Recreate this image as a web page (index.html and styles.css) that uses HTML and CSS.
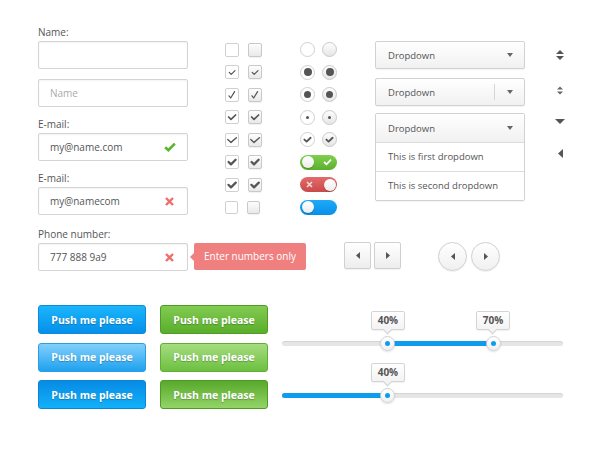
FILE: index.html
```html
<!DOCTYPE html>
<html lang="en">
<head>
    <meta charset="UTF-8">
    <meta name="viewport" content="width=device-width, initial-scale=1.0">
    <title>UI Kit</title>
    <link rel="stylesheet" href="styles.css">
</head>
<body>
<div class="page">
    <div class="top">
        <div class="fields">
            <div class="field">
                <label>Name:</label>
                <div class="input"></div>
            </div>
            <div class="input"><span class="placeholder">Name</span></div>
            <div class="field">
                <label>E-mail:</label>
                <div class="input">
                    <span>my@name.com</span>
                    <svg class="ok" width="12" height="10" viewBox="0 0 12 10"><path d="M1.2 5.2 L4.4 8.2 L10.8 1.6" fill="none" stroke="#5ab52e" stroke-width="2.6"/></svg>
                </div>
            </div>
            <div class="field">
                <label>E-mail:</label>
                <div class="input">
                    <span>my@namecom</span>
                    <svg class="bad" width="9" height="9" viewBox="0 0 9 9"><path d="M1 1 L8 8 M8 1 L1 8" stroke="#ee6d6d" stroke-width="2.4"/></svg>
                </div>
            </div>
        </div>

        <div class="tools">
            <div class="checks">
                <div class="row"><span class="box"></span><span class="box alt"></span></div>
                <div class="row">
                    <span class="box"><svg viewBox="0 0 14 14"><path d="M4.2 7.4 L6.2 9.4 L10 5.6" class="mk" stroke-width="1.2"/></svg></span>
                    <span class="box alt"><svg viewBox="0 0 14 14"><path d="M4.2 7.4 L6.2 9.4 L10 5.6" class="mk" stroke-width="1.2"/></svg></span>
                </div>
                <div class="row">
                    <span class="box"><svg viewBox="0 0 14 14"><path d="M4 7.8 L5.7 10 L9.6 3.6" class="mk" stroke-width="1.2"/></svg></span>
                    <span class="box alt"><svg viewBox="0 0 14 14"><path d="M4 7.8 L5.7 10 L9.6 3.6" class="mk" stroke-width="1.2"/></svg></span>
                </div>
                <div class="row">
                    <span class="box"><svg viewBox="0 0 14 14"><path d="M3.6 7 L6 9.4 L10.6 5" class="mk" stroke-width="1.7"/></svg></span>
                    <span class="box alt"><svg viewBox="0 0 14 14"><path d="M3.6 7 L6 9.4 L10.6 5" class="mk" stroke-width="1.7"/></svg></span>
                </div>
                <div class="row">
                    <span class="box"><svg viewBox="0 0 14 14"><path d="M2.8 6.4 L6 9.4 L11.4 4.8" class="mk" stroke-width="1.4"/></svg></span>
                    <span class="box alt"><svg viewBox="0 0 14 14"><path d="M2.8 6.4 L6 9.4 L11.4 4.8" class="mk" stroke-width="1.4"/></svg></span>
                </div>
                <div class="row">
                    <span class="box"><svg viewBox="0 0 14 14"><path d="M3.6 7 L6 9.4 L10.6 4.8" class="mk" stroke-width="2.3"/></svg></span>
                    <span class="box alt"><svg viewBox="0 0 14 14"><path d="M3.6 7 L6 9.4 L10.6 4.8" class="mk" stroke-width="2.3"/></svg></span>
                </div>
                <div class="row">
                    <span class="box"><svg viewBox="0 0 14 14"><path d="M3.4 6.8 L6 9.4 L10.8 4.6" class="mk" stroke-width="2.2"/></svg></span>
                    <span class="box alt"><svg viewBox="0 0 14 14"><path d="M3.4 6.8 L6 9.4 L10.8 4.6" class="mk" stroke-width="2.2"/></svg></span>
                </div>
                <div class="row"><span class="box small"></span><span class="box alt small"></span></div>
            </div>

            <div class="radios">
                <div class="row"><span class="radio"></span><span class="radio alt"></span></div>
                <div class="row"><span class="radio"><i class="dot big"></i></span><span class="radio alt"><i class="dot big"></i></span></div>
                <div class="row"><span class="radio"><i class="dot mid"></i></span><span class="radio alt"><i class="dot mid"></i></span></div>
                <div class="row"><span class="radio"><i class="dot tiny"></i></span><span class="radio alt"><i class="dot tiny"></i></span></div>
                <div class="row">
                    <span class="radio"><svg viewBox="0 0 15 15"><path d="M4.4 7.6 L6.6 9.6 L10.6 5.8" class="mk" stroke-width="1.9"/></svg></span>
                    <span class="radio alt"><svg viewBox="0 0 15 15"><path d="M4.4 7.6 L6.6 9.6 L10.6 5.8" class="mk" stroke-width="1.9"/></svg></span>
                </div>
                <div class="row">
                    <span class="toggle green"><i class="knob"></i><svg width="9" height="8" viewBox="0 0 9 8"><path d="M1 4 L3.5 6.3 L8 1.6" fill="none" stroke="#fff" stroke-width="1.8"/></svg></span>
                </div>
                <div class="row">
                    <span class="toggle red"><svg width="7" height="7" viewBox="0 0 7 7"><path d="M1 1 L6 6 M6 1 L1 6" stroke="#f6dada" stroke-width="1.6"/></svg><i class="knob"></i></span>
                </div>
                <div class="row">
                    <span class="toggle blue"><i class="knob"></i></span>
                </div>
            </div>

            <div class="dropdowns">
                <div class="dropdown">
                    <span>Dropdown</span>
                    <i class="caret"></i>
                </div>
                <div class="dropdown">
                    <span>Dropdown</span>
                    <span class="split"><i class="sep"></i><i class="caret"></i></span>
                </div>
                <div class="dropdown-open">
                    <div class="dropdown-head">
                        <span>Dropdown</span>
                        <i class="caret"></i>
                    </div>
                    <div class="dropdown-item">This is first dropdown</div>
                    <div class="dropdown-item">This is second dropdown</div>
                </div>
            </div>

            <div class="arrows">
                <svg class="a1" width="8" height="12" viewBox="0 0 8 12"><path d="M0 5 L4 1 L8 5 Z M0 7 L8 7 L4 11 Z" fill="#555"/></svg>
                <svg class="a2" width="6" height="9" viewBox="0 0 6 9"><path d="M0 3.5 L3 0.5 L6 3.5 Z M0 5.5 L6 5.5 L3 8.5 Z" fill="#666"/></svg>
                <svg class="a3" width="10" height="5" viewBox="0 0 10 5"><path d="M0 0 L10 0 L5 5 Z" fill="#555"/></svg>
                <svg class="a4" width="5" height="9" viewBox="0 0 5 9"><path d="M5 0 L5 9 L0 4.5 Z" fill="#555"/></svg>
            </div>
        </div>

        <div class="field phone">
            <label>Phone number:</label>
            <div class="input">
                <span>777 888 9a9</span>
                <svg class="bad" width="9" height="9" viewBox="0 0 9 9"><path d="M1 1 L8 8 M8 1 L1 8" stroke="#ee6d6d" stroke-width="2.4"/></svg>
            </div>
            <div class="error-tip">Enter numbers only</div>
        </div>

        <div class="pagers">
            <div class="pager-group">
                <span class="pg"><svg width="4" height="7" viewBox="0 0 4 7"><path d="M4 0 L4 7 L0 3.5 Z" fill="#555"/></svg></span>
                <span class="pg"><svg width="4" height="7" viewBox="0 0 4 7"><path d="M0 0 L0 7 L4 3.5 Z" fill="#555"/></svg></span>
            </div>
            <div class="pager-group round">
                <span class="pg"><svg width="4" height="7" viewBox="0 0 4 7"><path d="M4 0 L4 7 L0 3.5 Z" fill="#555"/></svg></span>
                <span class="pg"><svg width="4" height="7" viewBox="0 0 4 7"><path d="M0 0 L0 7 L4 3.5 Z" fill="#555"/></svg></span>
            </div>
        </div>
    </div>

    <div class="bottom">
        <div class="buttons">
            <button class="btn blue">Push me please</button>
            <button class="btn green">Push me please</button>
            <button class="btn blue hover">Push me please</button>
            <button class="btn green hover">Push me please</button>
            <button class="btn blue active">Push me please</button>
            <button class="btn green active">Push me please</button>
        </div>

        <div class="sliders">
            <div class="slider first">
                <div class="fill" style="left:37.7%; width:37.4%"></div>
                <div class="handle" style="left:37.7%"><span class="tip">40%</span></div>
                <div class="handle" style="left:75.1%"><span class="tip">70%</span></div>
            </div>
            <div class="slider second">
                <div class="fill" style="left:0; width:37.7%"></div>
                <div class="handle" style="left:37.7%"><span class="tip">40%</span></div>
            </div>
        </div>
    </div>
</div>
</body>
</html>
```

FILE: styles.css
```css
body {
    margin: 0;
    font-family: "Open Sans", sans-serif;
    font-size: 10px;
    color: #555;
    background: #fff;
}
.page {
    padding: 25px 0 0 38px;
}
.top {
    display: grid;
    grid-template-columns: 150px 1fr;
    column-gap: 37px;
    row-gap: 12px;
}

/* inputs */
.fields {
    display: flex;
    flex-direction: column;
    gap: 10px;
}
.field label {
    display: block;
    line-height: 14px;
    margin-bottom: 2px;
    color: #555;
}
.input {
    box-sizing: border-box;
    height: 28px;
    border: 1px solid #d4d4d4;
    border-radius: 2px;
    padding: 0 10px 0 11px;
    display: flex;
    align-items: center;
    justify-content: space-between;
    box-shadow: inset 0 1px 2px rgba(0,0,0,0.05);
    color: #555;
}
.placeholder {
    color: #aaa;
}
.input .ok {
    margin-right: 1px;
}
.input .bad {
    margin-right: 3px;
}
.phone {
    position: relative;
}
.error-tip {
    position: absolute;
    left: 156px;
    top: 16px;
    width: 112px;
    height: 27px;
    line-height: 27px;
    text-align: center;
    background: #f07f7f;
    color: #fff;
    border-radius: 2px;
}
.error-tip::before {
    content: "";
    position: absolute;
    left: -4px;
    top: 10px;
    border-top: 4px solid transparent;
    border-bottom: 4px solid transparent;
    border-right: 4px solid #f07f7f;
}

/* checkboxes and radios */
.tools {
    display: flex;
    align-items: flex-start;
}
.checks, .radios {
    display: flex;
    flex-direction: column;
    gap: 7.5px;
    margin-top: 17px;
}
.radios {
    margin-left: 38px;
}
.row {
    height: 15px;
    display: flex;
    align-items: center;
    gap: 9px;
}
.radios .row {
    gap: 7px;
}
.box {
    box-sizing: border-box;
    width: 14px;
    height: 14px;
    border: 1px solid #d0d0d0;
    border-radius: 2px;
    background: #fff;
    display: block;
}
.box.alt {
    background: linear-gradient(#fdfdfd, #e9e9e9);
    border-color: #c9c9c9;
    box-shadow: 0 1px 1px rgba(0,0,0,0.06);
}
.box.small {
    width: 13px;
    height: 13px;
}
.box svg, .radio svg {
    display: block;
    margin: -1px;
    width: calc(100% + 2px);
    height: calc(100% + 2px);
}
.mk {
    fill: none;
    stroke: #555;
    stroke-linecap: round;
    stroke-linejoin: round;
}
.radio {
    box-sizing: border-box;
    width: 15px;
    height: 15px;
    border: 1px solid #d0d0d0;
    border-radius: 50%;
    background: #fff;
    display: flex;
    align-items: center;
    justify-content: center;
}
.radio.alt {
    background: linear-gradient(#fdfdfd, #e6e6e6);
    border-color: #c9c9c9;
}
.dot {
    display: block;
    border-radius: 50%;
    background: #555;
}
.dot.big { width: 8px; height: 8px; }
.dot.mid { width: 7px; height: 7px; }
.dot.tiny { width: 3px; height: 3px; }

.toggle {
    box-sizing: border-box;
    width: 37px;
    height: 15px;
    border-radius: 8px;
    padding: 0 1.5px;
    display: flex;
    align-items: center;
    justify-content: space-between;
}
.toggle.green {
    background: linear-gradient(#80cf50, #5ab02c);
    padding-right: 5px;
}
.toggle.red {
    background: linear-gradient(#e36b6b, #c94a4a);
    padding-left: 6px;
}
.toggle.blue {
    background: linear-gradient(#1eaaf8, #0690e8);
}
.knob {
    display: block;
    width: 12px;
    height: 12px;
    border-radius: 50%;
    background: linear-gradient(#fff, #ececec);
    box-shadow: 0 1px 1px rgba(0,0,0,0.2);
}

/* dropdowns */
.dropdowns {
    width: 150px;
    margin-left: 38px;
    margin-top: 16px;
    display: flex;
    flex-direction: column;
    font-size: 9.5px;
}
.dropdown, .dropdown-head {
    box-sizing: border-box;
    height: 28px;
    padding: 0 11px 0 12px;
    display: flex;
    align-items: center;
    justify-content: space-between;
    background: linear-gradient(#fff, #f1f1f1);
}
.dropdown {
    border: 1px solid #d2d2d2;
    border-radius: 2px;
    box-shadow: 0 1px 1px rgba(0,0,0,0.05);
    margin-bottom: 9px;
}
.dropdown:nth-child(2) {
    margin-bottom: 7px;
}
.caret {
    display: block;
    width: 0;
    height: 0;
    border-left: 3.5px solid transparent;
    border-right: 3.5px solid transparent;
    border-top: 4px solid #666;
}
.split {
    display: flex;
    align-items: center;
}
.sep {
    display: block;
    width: 1px;
    height: 16px;
    background: #d6d6d6;
    margin-right: 12px;
}
.dropdown-open {
    border: 1px solid #d2d2d2;
    border-radius: 2px;
    box-shadow: 0 1px 1px rgba(0,0,0,0.05);
}
.dropdown-item {
    height: 28px;
    line-height: 28px;
    padding-left: 12px;
    border-top: 1px solid #dcdcdc;
    background: #fff;
}

.arrows {
    margin-left: 30px;
    width: 10px;
    display: flex;
    flex-direction: column;
    align-items: center;
}
.arrows svg {
    display: block;
}
.a1 { margin-top: 24px; }
.a2 { margin-top: 25px; }
.a3 { margin-top: 24px; }
.a4 { margin-top: 25px; }

/* pagers */
.pagers {
    align-self: end;
    padding-left: 119px;
    display: flex;
    align-items: flex-start;
    gap: 37px;
}
.pager-group {
    display: flex;
    gap: 3px;
}
.pg {
    box-sizing: border-box;
    width: 27px;
    height: 27px;
    border: 1px solid #d0d0d0;
    border-radius: 2px;
    background: linear-gradient(#fff, #ededed);
    box-shadow: 0 1px 1px rgba(0,0,0,0.06);
    display: flex;
    align-items: center;
    justify-content: center;
}
.pg svg {
    display: block;
}
.round {
    gap: 4px;
}
.round .pg {
    width: 29px;
    height: 29px;
    border-radius: 50%;
    background: linear-gradient(#fff, #f0f0f0);
}

/* buttons */
.bottom {
    display: flex;
    margin-top: 34px;
}
.buttons {
    display: grid;
    grid-template-columns: 108px 108px;
    column-gap: 14px;
    row-gap: 8.5px;
}
.btn {
    height: 29px;
    border-radius: 3px;
    border: 1px solid;
    font-family: "Open Sans", sans-serif;
    font-size: 10.5px;
    font-weight: bold;
    color: #fff;
    text-shadow: 0 1px 1px rgba(0,0,0,0.25);
    padding: 0;
    cursor: pointer;
}
.btn.blue {
    background: linear-gradient(#1bb5fb, #0590ea);
    border-color: #0b8bd9;
}
.btn.blue.hover {
    background: linear-gradient(#82cffb, #1ea2ef);
    border-color: #2a9ee0;
}
.btn.blue.active {
    background: linear-gradient(#078be5, #12b0fa);
    border-color: #0a86d6;
}
.btn.green {
    background: linear-gradient(#82cb52, #5aae2b);
    border-color: #4f9c25;
}
.btn.green.hover {
    background: linear-gradient(#a6dc80, #6cc040);
    border-color: #62ad38;
}
.btn.green.active {
    background: linear-gradient(#58a92b, #93d468);
    border-color: #4f9c25;
}

/* sliders */
.sliders {
    margin-left: 14px;
    width: 281px;
}
.slider {
    position: relative;
    height: 5px;
    border-radius: 3px;
    background: #e6e6e6;
    box-shadow: inset 0 1px 1px rgba(0,0,0,0.08);
}
.slider.first {
    margin-top: 35.5px;
}
.slider.second {
    margin-top: 47px;
}
.fill {
    position: absolute;
    top: 0;
    bottom: 0;
    border-radius: 3px;
    background: #0e9cef;
}
.handle {
    position: absolute;
    top: 50%;
    box-sizing: border-box;
    width: 15px;
    height: 15px;
    margin: -7.5px 0 0 -7.5px;
    border: 1px solid #d2d2d2;
    border-radius: 50%;
    background: linear-gradient(#fff, #f0f0f0);
    box-shadow: 0 1px 2px rgba(0,0,0,0.12);
}
.handle::after {
    content: "";
    position: absolute;
    left: 4px;
    top: 4px;
    width: 5px;
    height: 5px;
    border-radius: 50%;
    background: #0e9cef;
}
.tip {
    position: absolute;
    bottom: 20px;
    left: 50%;
    transform: translateX(-50%);
    box-sizing: border-box;
    width: 34px;
    height: 19px;
    line-height: 17px;
    text-align: center;
    border: 1px solid #d4d4d4;
    border-radius: 2px;
    background: linear-gradient(#fff, #f3f3f3);
    box-shadow: 0 1px 1px rgba(0,0,0,0.06);
    font-weight: bold;
    font-size: 10px;
    color: #555;
}
.tip::after {
    content: "";
    position: absolute;
    left: 50%;
    bottom: -4px;
    margin-left: -4px;
    width: 6px;
    height: 6px;
    background: #f3f3f3;
    border-right: 1px solid #d4d4d4;
    border-bottom: 1px solid #d4d4d4;
    transform: rotate(45deg);
}
```
